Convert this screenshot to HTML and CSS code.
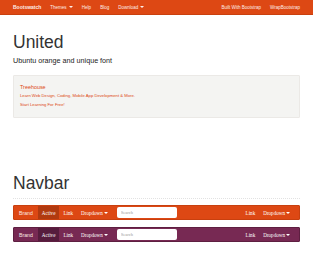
FILE: index.html
```html
<!DOCTYPE html>
<html lang="en">
<head>
    <meta charset="UTF-8">
    <meta name="viewport" content="width=device-width, initial-scale=1.0">
    <title>Bootswatch: United</title>
    <link rel="stylesheet" href="styles.css">
</head>
<body>
    <header class="topbar">
        <div class="container topbar-inner">
            <a class="topbar-brand" href="#">Bootswatch</a>
            <nav class="topbar-nav">
                <a href="#">Themes <span class="caret"></span></a>
                <a href="#">Help</a>
                <a href="#">Blog</a>
                <a href="#">Download <span class="caret"></span></a>
            </nav>
            <nav class="topbar-nav topbar-right">
                <a href="#">Built With Bootstrap</a>
                <a href="#">WrapBootstrap</a>
            </nav>
        </div>
    </header>

    <main class="container">
        <section class="masthead">
            <h1>United</h1>
            <p class="lead">Ubuntu orange and unique font</p>
            <div class="well">
                <h4>Treehouse</h4>
                <p>Learn Web Design, Coding, Mobile App Development &amp; More.</p>
                <p class="well-cta">Start Learning For Free!</p>
            </div>
        </section>

        <section class="section">
            <div class="page-header">
                <h1>Navbar</h1>
            </div>

            <div class="navbar">
                <a class="brand" href="#">Brand</a>
                <ul class="nav">
                    <li class="active"><a href="#">Active</a></li>
                    <li><a href="#">Link</a></li>
                    <li><a href="#">Dropdown <span class="caret"></span></a></li>
                </ul>
                <input class="search" type="text" placeholder="Search">
                <ul class="nav nav-right">
                    <li><a href="#">Link</a></li>
                    <li><a href="#">Dropdown <span class="caret"></span></a></li>
                </ul>
            </div>

            <div class="navbar navbar-inverse">
                <a class="brand" href="#">Brand</a>
                <ul class="nav">
                    <li class="active"><a href="#">Active</a></li>
                    <li><a href="#">Link</a></li>
                    <li><a href="#">Dropdown <span class="caret"></span></a></li>
                </ul>
                <input class="search" type="text" placeholder="Search">
                <ul class="nav nav-right">
                    <li><a href="#">Link</a></li>
                    <li><a href="#">Dropdown <span class="caret"></span></a></li>
                </ul>
            </div>
        </section>
    </main>
</body>
</html>
```

FILE: styles.css
```css
* { margin: 0; padding: 0; box-sizing: border-box; }

body {
    font-family: "Liberation Sans", Arial, sans-serif;
    background: #fff;
    color: #333;
}

a { text-decoration: none; color: inherit; }
ul { list-style: none; }

.container {
    padding: 0 13px;
}

.caret {
    display: inline-block;
    width: 0;
    height: 0;
    vertical-align: middle;
    border-top: 2px solid currentColor;
    border-left: 2px solid transparent;
    border-right: 2px solid transparent;
    margin-left: 1px;
}

/* top bar */
.topbar {
    height: 15px;
    background: #dd4814;
    border-bottom: 1px solid #c9400f;
    color: #fdeee8;
}

.topbar-inner {
    display: flex;
    align-items: center;
    height: 100%;
}

.topbar-brand {
    font-size: 5px;
    font-weight: bold;
    margin-right: 9px;
}

.topbar-nav {
    display: flex;
    gap: 9px;
    font-size: 4.5px;
}

.topbar-right {
    margin-left: auto;
}

/* masthead */
.masthead {
    padding-top: 17px;
}

h1 {
    font-size: 17.5px;
    line-height: 20px;
    font-weight: normal;
    color: #333;
}

.lead {
    font-size: 7.2px;
    line-height: 9px;
    margin-top: 4px;
    color: #222;
}

.well {
    margin-top: 10px;
    height: 43px;
    padding: 8px 6px 0;
    background: #f4f4f2;
    border: 1px solid #ebe9e6;
    border-radius: 1px;
    color: #dd4814;
}

.well h4 {
    font-size: 5.4px;
    line-height: 7px;
    font-weight: normal;
}

.well p {
    font-size: 4.2px;
    line-height: 6px;
    margin-top: 2px;
}

.well .well-cta {
    margin-top: 3px;
}

/* navbar section */
.section {
    padding-top: 55px;
}

.page-header {
    padding-bottom: 5px;
    border-bottom: 1px dotted #e2e2e2;
    margin-bottom: 6px;
}

.navbar {
    display: flex;
    align-items: stretch;
    height: 15px;
    padding: 0 5px;
    margin-bottom: 7px;
    background: #dd4814;
    border: 1px solid #c8400f;
    border-radius: 1px;
    color: #fff;
}

.navbar-inverse {
    background: #772953;
    border-color: #5e1f41;
}

.brand {
    display: flex;
    align-items: center;
    font-size: 5.2px;
    margin-right: 5px;
    color: #fbe9e2;
}

.nav {
    display: flex;
    font-family: "Liberation Serif", "Times New Roman", serif;
    font-size: 5.1px;
}

.nav li a {
    display: flex;
    align-items: center;
    height: 100%;
    padding: 0 4px;
}

.nav .active a {
    background: #b13a10;
}

.navbar-inverse .nav .active a {
    background: #561c3d;
}

.search {
    align-self: center;
    width: 60px;
    height: 11px;
    margin-left: 5px;
    padding: 0 4px;
    border: none;
    border-radius: 2px;
    background: #fff;
    font-family: "Liberation Serif", "Times New Roman", serif;
    font-size: 4.5px;
}

.search::placeholder {
    color: #999;
}

.nav-right {
    margin-left: auto;
}
```
